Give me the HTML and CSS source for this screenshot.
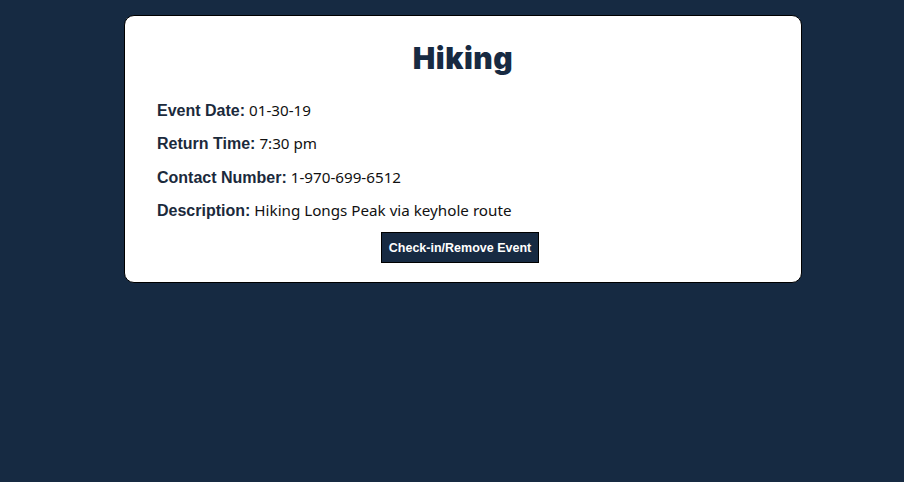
FILE: index.html
```html
<!DOCTYPE html>
<html>
<head>
<meta charset="utf-8">
<link rel="stylesheet" href="styles.css">
</head>
<body>
<div class="card">
  <h1 class="title">Hiking</h1>
  <p class="row"><span class="label">Event Date:</span> <span class="value">01-30-19</span></p>
  <p class="row"><span class="label">Return Time:</span> <span class="value">7:30 pm</span></p>
  <p class="row"><span class="label">Contact Number:</span> <span class="value">1-970-699-6512</span></p>
  <p class="row"><span class="label">Description:</span> <span class="value">Hiking Longs Peak via keyhole route</span></p>
  <div class="actions"><button class="btn">Check-in/Remove Event</button></div>
</div>
</body>
</html>
```
FILE: styles.css
```css
html, body {
  margin: 0;
  padding: 0;
  background: #162a42;
  height: 100%;
}
body {
  padding-top: 15px;
  box-sizing: border-box;
}
.card {
  margin-left: 124px;
  width: 678px;
  box-sizing: border-box;
  background: #fff;
  border: 1px solid #000;
  border-radius: 10px;
  padding: 24px 32px 19px;
}
.title {
  margin: 0 0 25px;
  text-align: center;
  font-family: Inter, "Liberation Sans", sans-serif;
  font-weight: 900;
  font-size: 30px;
  line-height: 36px;
  color: #172a42;
  letter-spacing: 0.5px;
}
.row {
  margin: 0 0 15.4px;
  font-size: 16px;
  line-height: 18px;
  height: 18px;
}
.row:last-of-type {
  margin-bottom: 13px;
}
.label {
  font-family: "Liberation Sans", Arial, sans-serif;
  font-weight: bold;
  color: #1b2a3c;
  line-height: 18px;
}
.value {
  font-family: "Noto Sans", "Open Sans", sans-serif;
  color: #111;
  font-size: 15.2px;
  line-height: 18px;
}
.actions {
  display: flex;
  justify-content: center;
  padding-right: 6px;
}
.btn {
  background: #172a42;
  color: #fff;
  border: 1px solid #000;
  font-family: "Liberation Sans", Arial, sans-serif;
  font-weight: bold;
  font-size: 12.5px;
  width: 158px;
  height: 31px;
  padding: 0;
}
```
